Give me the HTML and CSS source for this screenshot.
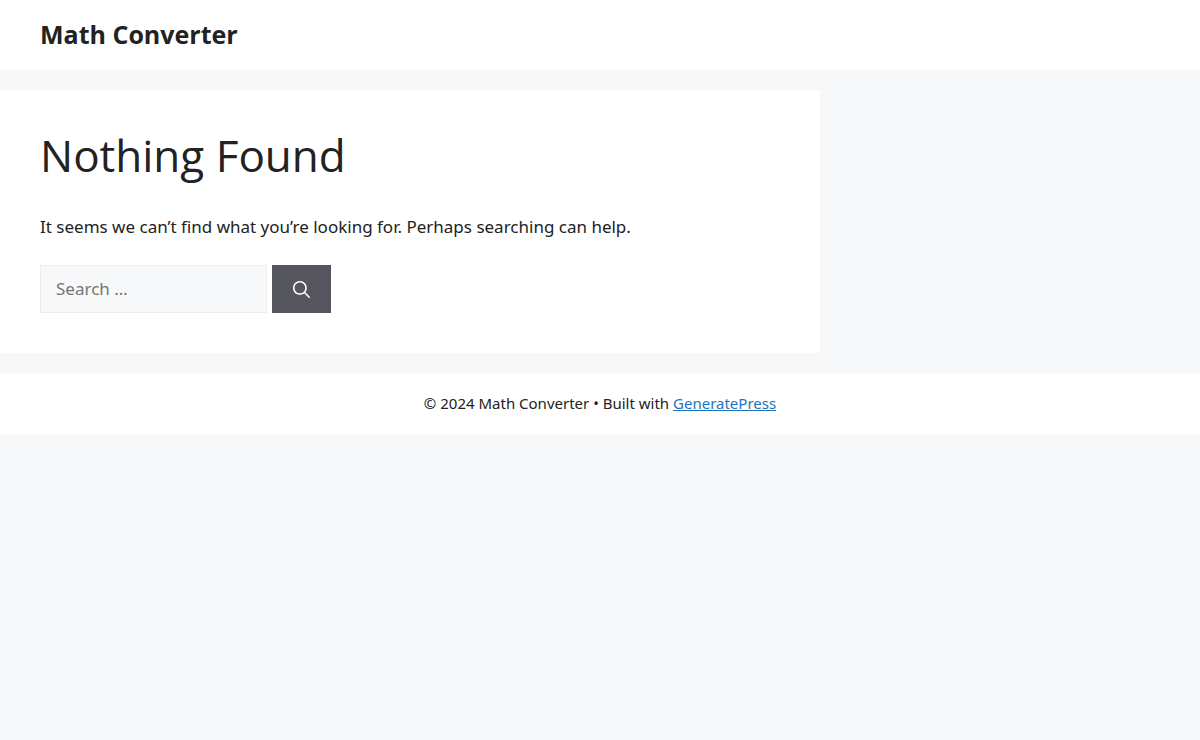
FILE: index.html
```html
<!DOCTYPE html>
<html lang="en">
  <head>
    <meta charset="UTF-8" />
    <meta name="viewport" content="width=device-width, initial-scale=1.0" />
    <title>Nothing Found - Math Converter</title>
    <link rel="stylesheet" href="styles.css">
  </head>
  <body>
    <header class="site-header">
      <div class="inside-header">
        <p class="main-title"><a href="#">Math Converter</a></p>
      </div>
    </header>

    <div class="site-content">
      <main class="content-area">
        <h1 class="page-title">Nothing Found</h1>
        <p class="page-text">It seems we can’t find what you’re looking for. Perhaps searching can help.</p>
        <form class="search-form" role="search">
          <input type="search" class="search-field" placeholder="Search …" aria-label="Search for:" />
          <button type="submit" class="search-submit" aria-label="Search">
            <svg viewBox="0 0 512 512" width="17" height="17" aria-hidden="true">
              <path fill="currentColor" fill-rule="evenodd" clip-rule="evenodd" d="M208 48c-88.366 0-160 71.634-160 160s71.634 160 160 160 160-71.634 160-160S296.366 48 208 48zM0 208C0 93.125 93.125 0 208 0s208 93.125 208 208c0 48.741-16.765 93.566-44.843 129.024l133.826 134.018c9.366 9.379 9.355 24.575-.025 33.941-9.379 9.366-24.575 9.355-33.941-.025L337.238 370.987C301.747 399.167 256.839 416 208 416 93.125 416 0 322.875 0 208z" />
            </svg>
          </button>
        </form>
      </main>
    </div>

    <footer class="site-info">
      <span>© 2024 Math Converter</span> • Built with <a href="#">GeneratePress</a>
    </footer>
  </body>
</html>
```
FILE: styles.css
```css
body {
    margin: 0;
    font-family: "Noto Sans", "Open Sans", sans-serif;
    font-size: 17px;
    line-height: 26px;
    color: #222;
    background-color: #f7f8f9;
}
h1, p {
    margin: 0;
}
.site-header {
    background-color: #fff;
}
.inside-header {
    padding: 19px 40px 21px;
}
.main-title {
    font-family: "Open Sans", sans-serif;
    font-size: 25px;
    font-weight: bold;
    line-height: 30px;
}
.main-title a {
    color: #222;
    text-decoration: none;
}
.site-content {
    display: grid;
    grid-template-columns: minmax(0, 820px);
    padding: 20px 0;
}
.content-area {
    background-color: #fff;
    padding: 40px;
}
.page-title {
    margin-bottom: 32px;
    font-family: "Open Sans", sans-serif;
    font-size: 44px;
    font-weight: normal;
    line-height: 50px;
}
.page-text {
    margin-bottom: 23px;
    line-height: 30px;
}
.search-form {
    display: flex;
    gap: 5px;
}
.search-field {
    box-sizing: border-box;
    width: 227px;
    height: 48px;
    padding: 9px 15px 11px;
    border: 1px solid #eaecee;
    border-radius: 0;
    font: inherit;
    color: #222;
    background-color: #f7f8f9;
    appearance: none;
}
.search-field::placeholder {
    color: #757575;
    opacity: 1;
}
.search-submit {
    display: flex;
    align-items: center;
    padding: 10px 21px;
    border: 0;
    color: #fff;
    background-color: #55555e;
    cursor: pointer;
}
.site-info {
    padding: 19px 40px 21px;
    font-size: 15px;
    line-height: 22px;
    text-align: center;
    background-color: #fff;
}
.site-info a {
    color: #1e73be;
}
```
